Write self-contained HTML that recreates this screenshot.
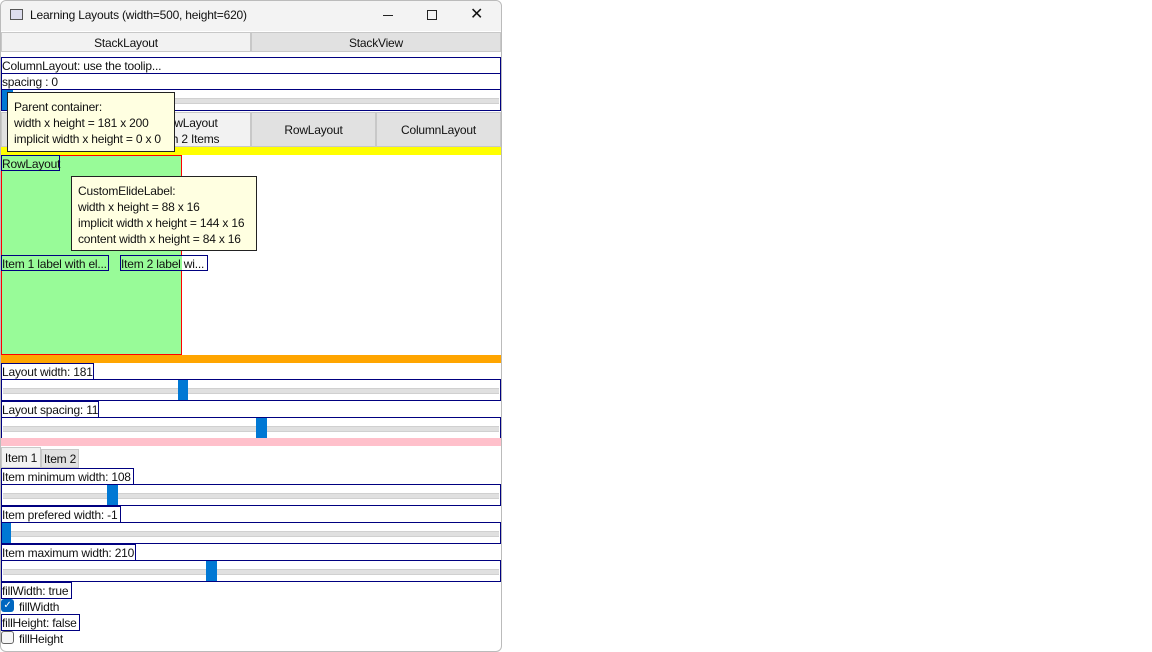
<!DOCTYPE html>
<html><head><style>
body{margin:0;width:1152px;height:652px;background:#fff;position:relative;overflow:hidden;font-family:"Liberation Sans",sans-serif;font-size:12px;color:#111;letter-spacing:-0.2px}
.a{position:absolute;box-sizing:border-box}
.nb{border:1px solid #000080;line-height:16px;white-space:nowrap;padding-left:0}
.sl{border:1px solid #000080}
.tr{position:absolute;left:1px;right:1px;top:8px;height:4px;background:#e0e0e0;border-top:1px solid #d0d0d0;border-bottom:1px solid #d0d0d0}
.h{position:absolute;top:0;bottom:0;width:11px;background:#0078d4}
.btn{background:#e1e1e1;border:1px solid #c8c8c8;text-align:center}
.tip{background:#ffffe1;border:1px solid #222;line-height:16px;padding:6px 0 0 6px}
</style></head><body>
<div class="a" style="left:0;top:0;width:502px;height:652px;border:1px solid #bbb;border-radius:6px;background:#fff;overflow:hidden">
</div>
<div class="a" style="left:1px;top:1px;width:500px;height:30px;background:#f3f3f3;border-radius:6px 6px 0 0"></div>
<div class="a" style="left:10px;top:9px;width:13px;height:11px;border:1px solid #555;background:#dde"></div>
<div class="a" style="left:30px;top:8px;font-size:12px">Learning Layouts (width=500, height=620)</div>
<div class="a" style="left:383px;top:15px;width:10px;height:1px;background:#222"></div>
<div class="a" style="left:427px;top:10px;width:10px;height:10px;border:1px solid #222"></div>
<div class="a" style="left:470px;top:4px;font-size:16px">✕</div>
<div class="a btn" style="left:1px;top:32px;width:250px;height:20px;background:#f2f2f2;line-height:20px">StackLayout</div>
<div class="a btn" style="left:251px;top:32px;width:250px;height:20px;line-height:20px">StackView</div>
<div class="a nb" style="left:1px;top:57px;width:500px;height:17px">ColumnLayout: use the toolip...</div>
<div class="a nb" style="left:1px;top:73px;width:500px;height:17px">spacing : 0</div>
<div class="a sl" style="left:1px;top:89px;width:500px;height:22px"><div class="tr"></div><div class="h" style="left:0"></div></div>
<div class="a btn" style="left:1px;top:112px;width:125px;height:35px"></div>
<div class="a btn" style="left:126px;top:112px;width:125px;height:35px;background:#f2f2f2;line-height:16px;padding-top:2px">RowLayout<br>with 2 Items</div>
<div class="a btn" style="left:251px;top:112px;width:125px;height:35px;line-height:35px">RowLayout</div>
<div class="a btn" style="left:376px;top:112px;width:125px;height:35px;line-height:35px">ColumnLayout</div>
<div class="a" style="left:1px;top:147px;width:500px;height:8px;background:#ffff00"></div>
<div class="a" style="left:1px;top:155px;width:181px;height:200px;background:#98fb98;border:1px solid red"></div>
<div class="a nb" style="left:1px;top:155px;width:59px;height:16px">RowLayout</div>
<div class="a nb" style="left:1px;top:255px;width:108px;height:16px;overflow:hidden">Item 1 label with el...</div>
<div class="a nb" style="left:120px;top:255px;width:88px;height:16px;background:linear-gradient(90deg,#98fb98 61px,#fff 61px);overflow:hidden">Item 2 label wi...</div>
<div class="a tip" style="left:7px;top:92px;width:168px;height:60px">Parent container:<br>width x height = 181 x 200<br>implicit width x height = 0 x 0</div>
<div class="a tip" style="left:71px;top:176px;width:186px;height:75px">CustomElideLabel:<br>width x height = 88 x 16<br>implicit width x height = 144 x 16<br>content width x height = 84 x 16</div>
<div class="a" style="left:1px;top:355px;width:500px;height:8px;background:#ffa500"></div>
<div class="a nb" style="left:1px;top:363px;width:93px;height:17px">Layout width: 181</div>
<div class="a sl" style="left:1px;top:379px;width:500px;height:22px"><div class="tr"></div><div class="h" style="left:176px;width:10px"></div></div>
<div class="a nb" style="left:1px;top:401px;width:98px;height:17px">Layout spacing: 11</div>
<div class="a sl" style="left:1px;top:417px;width:500px;height:22px"><div class="tr"></div><div class="h" style="left:254px"></div></div>
<div class="a" style="left:1px;top:438px;width:500px;height:8px;background:#ffc0cb"></div>
<div class="a btn" style="left:1px;top:447px;width:40px;height:21px;background:#f2f2f2;line-height:21px">Item 1</div>
<div class="a btn" style="left:41px;top:449px;width:38px;height:19px;line-height:19px">Item 2</div>
<div class="a nb" style="left:1px;top:468px;width:133px;height:17px">Item minimum width: 108</div>
<div class="a sl" style="left:1px;top:484px;width:500px;height:22px"><div class="tr"></div><div class="h" style="left:105px"></div></div>
<div class="a nb" style="left:1px;top:506px;width:120px;height:17px">Item prefered width: -1</div>
<div class="a sl" style="left:1px;top:522px;width:500px;height:22px"><div class="tr"></div><div class="h" style="left:0;width:9px"></div></div>
<div class="a nb" style="left:1px;top:544px;width:135px;height:17px">Item maximum width: 210</div>
<div class="a sl" style="left:1px;top:560px;width:500px;height:22px"><div class="tr"></div><div class="h" style="left:204px"></div></div>
<div class="a nb" style="left:1px;top:582px;width:71px;height:17px">fillWidth: true</div>
<div class="a" style="left:1px;top:599px;width:13px;height:13px;background:#0067c0;border-radius:3px;color:#fff;font-size:10px;line-height:13px;text-align:center">✓</div>
<div class="a" style="left:19px;top:600px">fillWidth</div>
<div class="a nb" style="left:1px;top:614px;width:79px;height:17px">fillHeight: false</div>
<div class="a" style="left:1px;top:631px;width:13px;height:13px;border:1px solid #666;border-radius:3px;background:#f6f6f6"></div>
<div class="a" style="left:19px;top:632px">fillHeight</div>
</body></html>
